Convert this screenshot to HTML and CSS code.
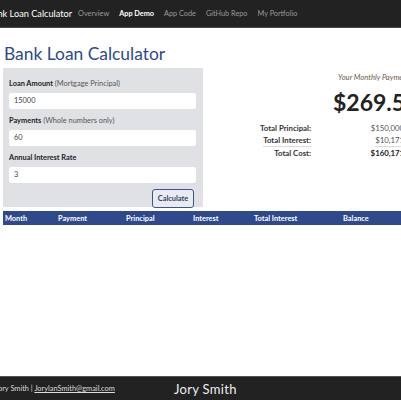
FILE: index.html
```html
<!DOCTYPE html>
<html lang="en">
<head>
<meta charset="utf-8">
<title>Bank Loan Calculator</title>
<link rel="stylesheet" href="styles.css">
</head>
<body>
<div class="page">
  <nav class="navbar">
    <span class="brand">Bank Loan Calculator</span>
    <a class="nav-link">Overview</a>
    <a class="nav-link active">App Demo</a>
    <a class="nav-link">App Code</a>
    <a class="nav-link">GitHub Repo</a>
    <a class="nav-link">My Portfolio</a>
  </nav>
  <main class="main">
    <h1 class="title">Bank Loan Calculator</h1>
    <div class="row">
      <form class="panel">
        <label class="label"><b>Loan Amount</b> (Mortgage Principal)</label>
        <div class="input">15000</div>
        <label class="label"><b>Payments</b> (Whole numbers only)</label>
        <div class="input">60</div>
        <label class="label"><b>Annual Interest Rate</b></label>
        <div class="input">3</div>
        <div class="btn-row"><span class="btn">Calculate</span></div>
      </form>
      <section class="results">
        <div class="monthly-label">Your Monthly Payment</div>
        <div class="monthly">$269.52</div>
        <div class="totals">
          <div class="t-label"><span>Total Principal:</span></div><div class="t-val"><span>$150,000.00</span></div>
          <div class="t-label"><span class="under">Total Interest:</span></div><div class="t-val"><span class="under">$10,171.23</span></div>
          <div class="t-label"><span>Total Cost:</span></div><div class="t-val bold"><span>$160,171.23</span></div>
        </div>
      </section>
    </div>
    <div class="table-head">
      <span>Month</span>
      <span>Payment</span>
      <span>Principal</span>
      <span>Interest</span>
      <span>Total Interest</span>
      <span>Balance</span>
    </div>
  </main>
  <footer class="footer">
    <span class="contact">Jory Smith | <a class="mail">JorylanSmith@gmail.com</a></span>
    <span class="sig">Jory Smith</span>
  </footer>
</div>
</body>
</html>
```

FILE: styles.css
```css
* { box-sizing: border-box; }
html, body { margin: 0; padding: 0; }
body {
  width: 401px;
  height: 400px;
  overflow: hidden;
  background: #fff;
  font-family: "Lato", "Open Sans", sans-serif;
  color: #212529;
}
.page {
  display: flex;
  flex-direction: column;
  height: 400px;
}
.navbar {
  height: 28px;
  background: #222;
  border-bottom: 1px solid #4a4a4a;
  display: flex;
  align-items: center;
  gap: 10px;
  white-space: nowrap;
}
.brand {
  margin-left: -13px;
  color: #fff;
  font-size: 9.2px;
  margin-right: -4px;
}
.nav-link {
  color: #9a9a9a;
  font-size: 7.3px;
}
.nav-link.active {
  color: #fff;
  font-weight: 700;
}
.main {
  padding: 0 0 0 3px;
}
.title {
  margin: 12px 0 0 1px;
  font-size: 17.4px;
  font-weight: 400;
  line-height: 28px;
  color: #2b4a8b;
  white-space: nowrap;
}
.row {
  display: flex;
  width: 440px;
}
.panel {
  width: 200px;
  height: 139px;
  background: #dfe1e5;
  padding: 10px 7px 0 6px;
  display: flex;
  flex-direction: column;
}
.label {
  font-size: 7.4px;
  color: #555;
  line-height: 12px;
  white-space: nowrap;
}
.label b { color: #222; }
.input {
  margin-top: 3px;
  margin-bottom: 6px;
  height: 16px;
  background: #fff;
  border-radius: 2px;
  font-size: 7.4px;
  line-height: 16px;
  padding-left: 5px;
  color: #444;
}
.btn-row {
  display: flex;
  justify-content: flex-end;
  padding-right: 2px;
}
.btn {
  width: 42px;
  height: 19px;
  border: 1.5px solid #3a5494;
  border-radius: 3px;
  background: #e9ebef;
  color: #2b3f6e;
  font-size: 7.4px;
  font-weight: 700;
  display: flex;
  align-items: center;
  justify-content: center;
}
.results {
  flex: 1;
  padding-top: 3px;
  padding-left: 50px;
  display: flex;
  flex-direction: column;
  white-space: nowrap;
}
.monthly-label {
  margin-left: 85px;
  font-size: 7.6px;
  font-style: italic;
  color: #6b5a4a;
  line-height: 12px;
}
.monthly {
  margin-left: 80px;
  margin-top: 4px;
  font-size: 23px;
  font-weight: 700;
  color: #222;
  line-height: 30px;
}
.totals {
  margin-top: 5px;
  display: grid;
  grid-template-columns: 58px 104px;
  font-size: 7.8px;
  line-height: 12px;
}
.t-label {
  text-align: right;
  font-weight: 700;
  color: #333;
}
.t-val {
  text-align: right;
  color: #555;
}
.t-val.bold { font-weight: 700; color: #222; }
.under { border-bottom: 1px solid #dcdde3; display: inline-block; line-height: 11px; }
.table-head {
  margin-top: 4px;
  height: 14px;
  background: #2e4a8c;
  color: #fff;
  font-size: 7.4px;
  font-weight: 700;
  display: grid;
  grid-template-columns: 53px 68px 67px 61px 89px 60px;
  align-items: center;
  padding-left: 2px;
  width: 420px;
  white-space: nowrap;
}
.footer {
  margin-top: auto;
  height: 24px;
  background: #222;
  border-top: 1px solid #555;
  display: flex;
  align-items: center;
  white-space: nowrap;
}
.contact {
  margin-left: -5px;
  color: #ddd;
  font-size: 7.4px;
  width: 179px;
}
.mail { color: #ddd; text-decoration: underline; }
.sig {
  color: #eee;
  font-size: 13px;
  letter-spacing: 0.3px;
}
```
